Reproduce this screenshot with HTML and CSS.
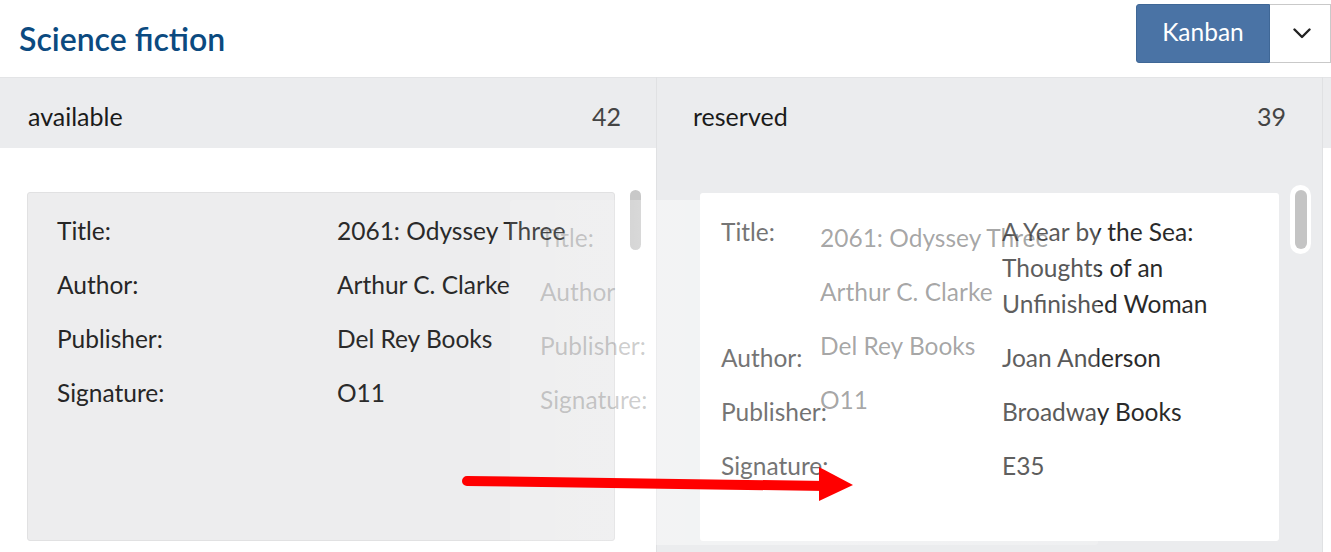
FILE: index.html
```html
<!DOCTYPE html>
<html lang="en">
<head>
<meta charset="utf-8">
<title>Science fiction – Kanban</title>
<link rel="stylesheet" href="styles.css">
</head>
<body>
<div class="app">
  <header class="topbar">
    <h1 class="page-title">Science fiction</h1>
    <div class="view-switch">
      <button class="btn-primary" type="button">Kanban</button>
      <button class="btn-toggle" type="button" aria-label="More views">
        <svg width="18" height="11" viewBox="0 0 18 11"><polyline points="1.5,1.5 9,9 16.5,1.5" fill="none" stroke="#222" stroke-width="2.4" stroke-linecap="round" stroke-linejoin="round"/></svg>
      </button>
    </div>
  </header>

  <main class="board">
    <section class="column column-source">
      <div class="column-head">
        <span class="column-name">available</span>
        <span class="column-count">42</span>
      </div>
      <div class="column-body">
        <article class="card card-placeholder">
          <dl class="fields">
            <dt>Title:</dt><dd>2061: Odyssey Three</dd>
            <dt>Author:</dt><dd>Arthur C. Clarke</dd>
            <dt>Publisher:</dt><dd>Del Rey Books</dd>
            <dt>Signature:</dt><dd>O11</dd>
          </dl>
        </article>
        <div class="scrollbar"><div class="scroll-thumb"></div></div>
      </div>
    </section>

    <section class="column column-target">
      <div class="column-head">
        <span class="column-name">reserved</span>
        <span class="column-count">39</span>
      </div>
      <div class="column-body">
        <article class="card card-light">
          <dl class="fields fields-wide">
            <dt>Title:</dt><dd>A Year by the Sea:<br>Thoughts of an<br>Unfinished Woman</dd>
            <dt>Author:</dt><dd>Joan Anderson</dd>
            <dt>Publisher:</dt><dd>Broadway Books</dd>
            <dt>Signature:</dt><dd>E35</dd>
          </dl>
        </article>
        <div class="scrollbar scrollbar-framed"><div class="scroll-thumb"></div></div>
      </div>
    </section>

    <section class="column column-stub">
      <div class="column-head column-head-empty"></div>
    </section>
  </main>

  <div class="drag-ghost">
    <dl class="fields">
      <dt>Title:</dt><dd>2061: Odyssey Three</dd>
      <dt>Author</dt><dd>Arthur C. Clarke</dd>
      <dt>Publisher:</dt><dd>Del Rey Books</dd>
      <dt>Signature:</dt><dd>O11</dd>
    </dl>
  </div>

  <svg class="annotation-arrow" width="1331" height="552" viewBox="0 0 1331 552">
    <line x1="467" y1="481" x2="826" y2="486" stroke="#ff0000" stroke-width="10" stroke-linecap="round"/>
    <polygon points="819,467 853,485 819,501" fill="#ff0000"/>
  </svg>
</div>
</body>
</html>
```

FILE: styles.css
```css
* { box-sizing: border-box; }

html, body {
  margin: 0;
  padding: 0;
  background: #ffffff;
}

body {
  font-family: Lato, "Open Sans", "Liberation Sans", sans-serif;
  color: #222222;
  width: 1331px;
  height: 552px;
  overflow: hidden;
}

.app {
  position: relative;
  width: 1331px;
  height: 552px;
}

/* ---------- top bar ---------- */
.topbar {
  height: 77px;
  display: flex;
  justify-content: space-between;
  align-items: flex-start;
  padding-left: 19px;
}

.page-title {
  margin: 0;
  padding-top: 19px;
  font-size: 32px;
  line-height: 40px;
  font-weight: 600;
  color: #0b4a80;
}

.view-switch {
  display: flex;
  margin-top: 4px;
  height: 59px;
}

.btn-primary {
  width: 134px;
  height: 59px;
  border: 1px solid #3f6796;
  border-radius: 3px 0 0 3px;
  background: #4a73a5;
  color: #ffffff;
  font-family: inherit;
  font-size: 24.5px;
  padding: 0 0 4px;
}

.btn-toggle {
  width: 61px;
  height: 59px;
  border: 1px solid #c9c9c9;
  border-left: none;
  background: #ffffff;
  padding: 0 0 0 4px;
  display: flex;
  align-items: center;
  justify-content: center;
}

/* ---------- board ---------- */
.board {
  display: flex;
  height: 475px;
}

.column {
  display: flex;
  flex-direction: column;
  flex: none;
  min-width: 0;
}

.column-head {
  height: 71px;
  flex: none;
  display: flex;
  justify-content: space-between;
  align-items: center;
  background: #ebecee;
  border-top: 1px solid #e3e4e6;
  padding: 6px 35px 0 28px;
  font-size: 25px;
}

.column-head-empty { padding: 0; }

.column-name { color: #1b1b1b; }
.column-count { color: #444444; }

.column-source {
  width: 657px;
  border-right: 1px solid #e0e1e3;
  background: #ffffff;
}

.column-target {
  width: 665px;
  background: #ebecee;
}

.column-target .column-head {
  padding: 6px 36px 0 36px;
}

.column-stub {
  flex: 1 1 auto;
  background: #ffffff;
  border-left: 1px solid #e0e1e3;
}

.column-body {
  display: flex;
  align-items: flex-start;
  flex: 1;
}

.column-source .column-body {
  padding: 44px 0 0 27px;
  gap: 15px;
}

.column-target .column-body {
  padding: 45px 0 0 43px;
  gap: 11px;
}

/* ---------- cards ---------- */
.card {
  border-radius: 3px;
  flex: none;
}

.card-placeholder {
  width: 588px;
  height: 349px;
  background: #ededee;
  border: 1px solid #e1e1e2;
  padding: 20px 29px;
}

.card-light {
  width: 579px;
  height: 348px;
  background: #ffffff;
  padding: 21px 21px;
}

.fields {
  margin: 0;
  display: grid;
  grid-template-columns: 280px 1fr;
  row-gap: 18px;
  font-size: 24.5px;
  line-height: 36px;
}

.fields-wide {
  grid-template-columns: 281px 1fr;
}

.fields dt,
.fields dd {
  margin: 0;
  white-space: nowrap;
}

.fields dt { color: #262626; }
.fields dd { color: #2a2a2a; }

/* ---------- scrollbars ---------- */
.scrollbar {
  flex: none;
  width: 11px;
  height: 60px;
  margin-top: -2px;
}

.scrollbar .scroll-thumb {
  width: 100%;
  height: 100%;
  border-radius: 6px;
  background: #c8c8c8;
}

.scrollbar-framed {
  width: 21px;
  height: 69px;
  margin-top: -8px;
  padding: 5px 4px 5px 5px;
  background: #ffffff;
  border-radius: 11px;
}

.scrollbar-framed .scroll-thumb {
  background: #c4c4c4;
}

/* ---------- dragged card ghost (overlay) ---------- */
.drag-ghost {
  position: absolute;
  left: 510px;
  top: 200px;
  width: 588px;
  height: 345px;
  padding: 20px 30px;
  border-radius: 3px;
  background: linear-gradient(90deg,
    rgba(255,255,255,0.12) 0%,
    rgba(255,255,255,0.16) 17.5%,
    rgba(255,255,255,0.38) 25%,
    rgba(255,255,255,0.34) 60%,
    rgba(255,255,255,0.2) 100%);
  pointer-events: none;
}

.drag-ghost .fields dt { color: rgba(60, 60, 60, 0.26); }
.drag-ghost .fields dd { color: rgba(40, 40, 40, 0.42); }

/* ---------- annotation ---------- */
.annotation-arrow {
  position: absolute;
  left: 0;
  top: 0;
  pointer-events: none;
}
```
